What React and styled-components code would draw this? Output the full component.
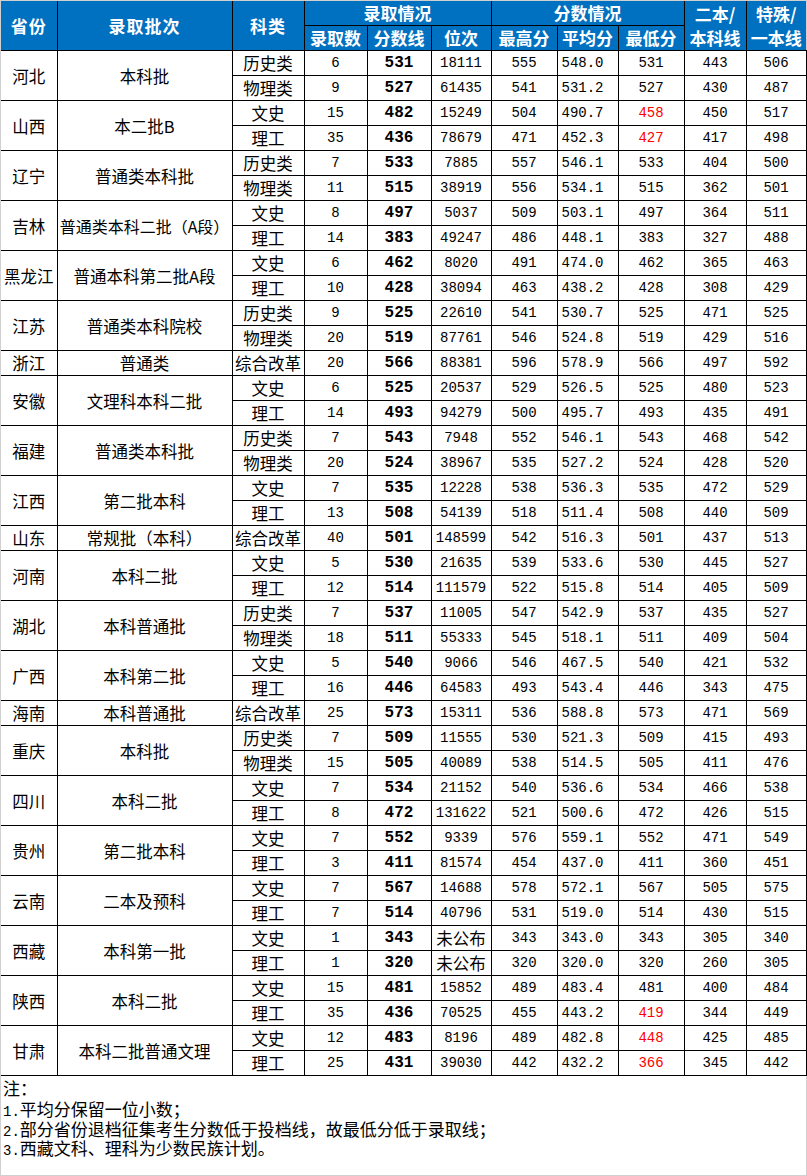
import React from "react";
import styled, { createGlobalStyle, css } from "styled-components";

const GlobalStyle = createGlobalStyle`
  html, body { margin: 0; padding: 0; background: #ffffff; }
  body { font-family: "Noto Sans CJK SC", "Noto Sans", sans-serif; color: #000; }
`;

const CJK = `"Noto Sans CJK SC", "Noto Sans", sans-serif`;
const MONO = `"Liberation Mono", "Noto Sans CJK SC", monospace`;

const Frame = styled.div`
  box-sizing: border-box;
  width: 807px;
  height: 1176px;
  border: 1px solid #d0d0d0;
  display: flex;
  flex-direction: column;
  background: #fff;
`;

const Table = styled.table`
  width: 805px;
  table-layout: fixed;
  border-collapse: collapse;
  border-spacing: 0;
`;

const HeadCell = styled.th`
  background: #0070c0;
  color: #fff;
  font-family: ${CJK};
  font-weight: 700;
  font-size: 17px;
  line-height: ${(p) => (p.$twoLine ? "24px" : "20px")};
  height: 24px;
  padding: 0;
  text-align: center;
  vertical-align: middle;
  border: 1px solid #000;
  border-top: none;
  white-space: nowrap;
  ${(p) => p.$first && css`border-left: none;`}
  ${(p) => p.$last && css`border-right: none;`}
  ${(p) => p.$spaced && css`letter-spacing: 1px;`}
`;

const Row = styled.tr`
  height: 25px;
`;

const Cell = styled.td`
  padding: 0;
  height: 24px;
  border: 1px solid #000;
  text-align: ${(p) => (p.$left ? "left" : "center")};
  padding-left: ${(p) => (p.$left ? "4px" : "0")};
  vertical-align: middle;
  white-space: nowrap;
  overflow: hidden;
  color: ${(p) => (p.$red ? "#ff0000" : "#000")};
  font-family: ${(p) => (p.$num ? MONO : CJK)};
  font-size: ${(p) => (p.$num ? "14px" : "16.5px")};
  font-weight: ${(p) => (p.$bold ? 700 : 400)};
  line-height: 20px;
  ${(p) => p.$bold && css`font-size: 16px;`}
  ${(p) => p.$first && css`border-left: none;`}
  ${(p) => p.$tight && css`font-size: 16px;`}
`;

const Notes = styled.div`
  flex: 1;
  padding: 2px 2px 0;
  font-family: ${CJK};
  font-size: 17px;
  color: #000;
`;

const NoteLine = styled.div`
  height: ${(p) => (p.$head ? "21px" : "19.7px")};
  line-height: 19.7px;
  white-space: nowrap;
`;

const NoteNum = styled.span`
  font-family: ${MONO};
  font-size: 14px;
  line-height: 1;
  vertical-align: baseline;
`;

const widths = [56, 175, 72, 63, 64, 60, 66, 61, 66, 62, 60];

const data = [
  ["河北", "本科批", [
    ["历史类", "6", "531", "18111", "555", "548.0", "531", "443", "506"],
    ["物理类", "9", "527", "61435", "541", "531.2", "527", "430", "487"],
  ]],
  ["山西", "本二批B", [
    ["文史", "15", "482", "15249", "504", "490.7", "458*", "450", "517"],
    ["理工", "35", "436", "78679", "471", "452.3", "427*", "417", "498"],
  ]],
  ["辽宁", "普通类本科批", [
    ["历史类", "7", "533", "7885", "557", "546.1", "533", "404", "500"],
    ["物理类", "11", "515", "38919", "556", "534.1", "515", "362", "501"],
  ]],
  ["吉林", "普通类本科二批（A段）", [
    ["文史", "8", "497", "5037", "509", "503.1", "497", "364", "511"],
    ["理工", "14", "383", "49247", "486", "448.1", "383", "327", "488"],
  ]],
  ["黑龙江", "普通本科第二批A段", [
    ["文史", "6", "462", "8020", "491", "474.0", "462", "365", "463"],
    ["理工", "10", "428", "38094", "463", "438.2", "428", "308", "429"],
  ]],
  ["江苏", "普通类本科院校", [
    ["历史类", "9", "525", "22610", "541", "530.7", "525", "471", "525"],
    ["物理类", "20", "519", "87761", "546", "524.8", "519", "429", "516"],
  ]],
  ["浙江", "普通类", [
    ["综合改革", "20", "566", "88381", "596", "578.9", "566", "497", "592"],
  ]],
  ["安徽", "文理科本科二批", [
    ["文史", "6", "525", "20537", "529", "526.5", "525", "480", "523"],
    ["理工", "14", "493", "94279", "500", "495.7", "493", "435", "491"],
  ]],
  ["福建", "普通类本科批", [
    ["历史类", "7", "543", "7948", "552", "546.1", "543", "468", "542"],
    ["物理类", "20", "524", "38967", "535", "527.2", "524", "428", "520"],
  ]],
  ["江西", "第二批本科", [
    ["文史", "7", "535", "12228", "538", "536.3", "535", "472", "529"],
    ["理工", "13", "508", "54139", "518", "511.4", "508", "440", "509"],
  ]],
  ["山东", "常规批（本科）", [
    ["综合改革", "40", "501", "148599", "542", "516.3", "501", "437", "513"],
  ]],
  ["河南", "本科二批", [
    ["文史", "5", "530", "21635", "539", "533.6", "530", "445", "527"],
    ["理工", "12", "514", "111579", "522", "515.8", "514", "405", "509"],
  ]],
  ["湖北", "本科普通批", [
    ["历史类", "7", "537", "11005", "547", "542.9", "537", "435", "527"],
    ["物理类", "18", "511", "55333", "545", "518.1", "511", "409", "504"],
  ]],
  ["广西", "本科第二批", [
    ["文史", "5", "540", "9066", "546", "467.5", "540", "421", "532"],
    ["理工", "16", "446", "64583", "493", "543.4", "446", "343", "475"],
  ]],
  ["海南", "本科普通批", [
    ["综合改革", "25", "573", "15311", "536", "588.8", "573", "471", "569"],
  ]],
  ["重庆", "本科批", [
    ["历史类", "7", "509", "11555", "530", "521.3", "509", "415", "493"],
    ["物理类", "15", "505", "40089", "538", "514.5", "505", "411", "476"],
  ]],
  ["四川", "本科二批", [
    ["文史", "7", "534", "21152", "540", "536.6", "534", "466", "538"],
    ["理工", "8", "472", "131622", "521", "500.6", "472", "426", "515"],
  ]],
  ["贵州", "第二批本科", [
    ["文史", "7", "552", "9339", "576", "559.1", "552", "471", "549"],
    ["理工", "3", "411", "81574", "454", "437.0", "411", "360", "451"],
  ]],
  ["云南", "二本及预科", [
    ["文史", "7", "567", "14688", "578", "572.1", "567", "505", "575"],
    ["理工", "7", "514", "40796", "531", "519.0", "514", "430", "515"],
  ]],
  ["西藏", "本科第一批", [
    ["文史", "1", "343", "未公布", "343", "343.0", "343", "305", "340"],
    ["理工", "1", "320", "未公布", "320", "320.0", "320", "260", "305"],
  ]],
  ["陕西", "本科二批", [
    ["文史", "15", "481", "15852", "489", "483.4", "481", "400", "484"],
    ["理工", "35", "436", "70525", "455", "443.2", "419*", "344", "449"],
  ]],
  ["甘肃", "本科二批普通文理", [
    ["文史", "12", "483", "8196", "489", "482.8", "448*", "425", "485"],
    ["理工", "25", "431", "39030", "442", "432.2", "366*", "345", "442"],
  ]],
];

function DataRows() {
  const rows = [];
  data.forEach(([prov, batch, subs]) => {
    subs.forEach((s, i) => {
      const [kind, count, line, rank, hi, avg, lo, b2, sp] = s;
      const loRed = lo.endsWith("*");
      const loVal = loRed ? lo.slice(0, -1) : lo;
      const rankNum = /^\d+$/.test(rank);
      rows.push(
        <Row key={prov + i}>
          {i === 0 && (
            <Cell $first rowSpan={subs.length}>{prov}</Cell>
          )}
          {i === 0 && (
            <Cell rowSpan={subs.length} $tight={batch.length > 9}>{batch}</Cell>
          )}
          <Cell>{kind}</Cell>
          <Cell $num>{count}</Cell>
          <Cell $num $bold>{line}</Cell>
          <Cell $num={rankNum}>{rank}</Cell>
          <Cell $num>{hi}</Cell>
          <Cell $num $left>{avg}</Cell>
          <Cell $num $red={loRed}>{loVal}</Cell>
          <Cell $num>{b2}</Cell>
          <Cell $num>{sp}</Cell>
        </Row>
      );
    });
  });
  return rows;
}

export default function App() {
  return (
    <>
      <GlobalStyle />
      <Frame>
        <Table>
          <colgroup>
            {widths.map((w, i) => (
              <col key={i} style={{ width: w }} />
            ))}
          </colgroup>
          <thead>
            <tr>
              <HeadCell $first rowSpan={2} $spaced>省份</HeadCell>
              <HeadCell rowSpan={2} $spaced>录取批次</HeadCell>
              <HeadCell rowSpan={2} $spaced>科类</HeadCell>
              <HeadCell colSpan={3}>录取情况</HeadCell>
              <HeadCell colSpan={3}>分数情况</HeadCell>
              <HeadCell rowSpan={2} $twoLine>二本/<br />本科线</HeadCell>
              <HeadCell $last rowSpan={2} $twoLine>特殊/<br />一本线</HeadCell>
            </tr>
            <tr>
              <HeadCell>录取数</HeadCell>
              <HeadCell>分数线</HeadCell>
              <HeadCell>位次</HeadCell>
              <HeadCell>最高分</HeadCell>
              <HeadCell>平均分</HeadCell>
              <HeadCell>最低分</HeadCell>
            </tr>
          </thead>
          <tbody>
            <DataRows />
          </tbody>
        </Table>
        <Notes>
          <NoteLine $head>注：</NoteLine>
          <NoteLine><NoteNum>1.</NoteNum>平均分保留一位小数；</NoteLine>
          <NoteLine><NoteNum>2.</NoteNum>部分省份退档征集考生分数低于投档线，故最低分低于录取线；</NoteLine>
          <NoteLine><NoteNum>3.</NoteNum>西藏文科、理科为少数民族计划。</NoteLine>
        </Notes>
      </Frame>
    </>
  );
}
